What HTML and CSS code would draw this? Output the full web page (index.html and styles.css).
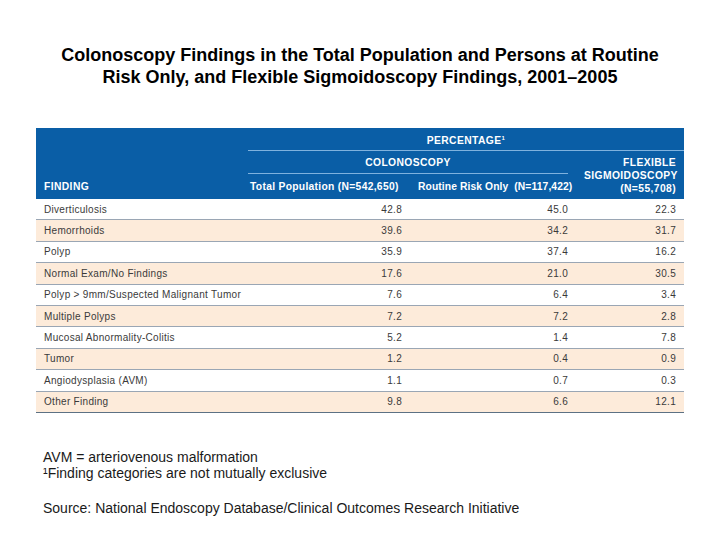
FILE: index.html
```html
<!DOCTYPE html>
<html>
<head>
<meta charset="utf-8">
<link rel="stylesheet" href="styles.css">
</head>
<body>
<div class="slide">
  <h1 class="title">Colonoscopy Findings in the Total Population and Persons at Routine<br>Risk Only, and Flexible Sigmoidoscopy Findings, 2001–2005</h1>
  <table class="data">
    <colgroup>
      <col class="c1"><col class="c2"><col class="c3"><col class="c4">
    </colgroup>
    <thead>
      <tr class="h1">
        <th></th>
        <th colspan="3" class="center ruled">PERCENTAGE<sup>1</sup></th>
      </tr>
      <tr class="h2">
        <th></th>
        <th colspan="2" class="center ruled short">COLONOSCOPY</th>
        <th rowspan="2" class="right flex">FLEXIBLE<br>SIGMOIDOSCOPY<br>(N=55,708)</th>
      </tr>
      <tr class="h3">
        <th class="left">FINDING</th>
        <th class="left">Total Population (N=542,650)</th>
        <th class="right">Routine Risk Only&nbsp; (N=117,422)</th>
      </tr>
    </thead>
    <tbody>
      <tr><td>Diverticulosis</td><td>42.8</td><td>45.0</td><td>22.3</td></tr>
      <tr class="alt"><td>Hemorrhoids</td><td>39.6</td><td>34.2</td><td>31.7</td></tr>
      <tr><td>Polyp</td><td>35.9</td><td>37.4</td><td>16.2</td></tr>
      <tr class="alt"><td>Normal Exam/No Findings</td><td>17.6</td><td>21.0</td><td>30.5</td></tr>
      <tr><td>Polyp &gt; 9mm/Suspected Malignant Tumor</td><td>7.6</td><td>6.4</td><td>3.4</td></tr>
      <tr class="alt"><td>Multiple Polyps</td><td>7.2</td><td>7.2</td><td>2.8</td></tr>
      <tr><td>Mucosal Abnormality-Colitis</td><td>5.2</td><td>1.4</td><td>7.8</td></tr>
      <tr class="alt"><td>Tumor</td><td>1.2</td><td>0.4</td><td>0.9</td></tr>
      <tr><td>Angiodysplasia (AVM)</td><td>1.1</td><td>0.7</td><td>0.3</td></tr>
      <tr class="alt last"><td>Other Finding</td><td>9.8</td><td>6.6</td><td>12.1</td></tr>
    </tbody>
  </table>
  <div class="notes">
    <p>AVM = arteriovenous malformation</p>
    <p>¹Finding categories are not mutually exclusive</p>
    <p class="source">Source: National Endoscopy Database/Clinical Outcomes Research Initiative</p>
  </div>
</div>
</body>
</html>
```

FILE: styles.css
```css
html, body {
  margin: 0;
  padding: 0;
  background: #ffffff;
}
.slide {
  width: 720px;
  height: 540px;
  font-family: "Liberation Sans", Arial, sans-serif;
}
.title {
  margin: 0;
  padding-top: 44px;
  text-align: center;
  font-size: 18px;
  line-height: 22px;
  font-weight: bold;
  color: #000;
}
.data {
  margin: 40px 0 0 36px;
  width: 648px;
  border-collapse: collapse;
  table-layout: fixed;
  font-family: "Liberation Sans", Arial, sans-serif;
}
.c1 { width: 212px; }
.c2 { width: 162px; }
.c3 { width: 166px; }
.c4 { width: 108px; }
thead th {
  background-color: #0a5ea6;
  color: #ffffff;
  font-size: 10.3px;
  font-weight: bold;
  letter-spacing: 0.4px;
  padding: 0 8px;
  white-space: nowrap;
}
thead th.center { text-align: center; }
thead th.left { text-align: left; }
thead th.right { text-align: right; }
.h1 th { height: 21px; vertical-align: middle; }
.h2 th { height: 23px; vertical-align: middle; }
.h3 th { height: 25px; vertical-align: middle; }
th.ruled {
  padding-left: 0;
  padding-right: 0;
  background-image: linear-gradient(#7fb2de, #7fb2de);
  background-repeat: no-repeat;
  background-position: left bottom;
  background-size: 100% 1px;
}
th.ruled.short {
  background-size: calc(100% - 8px) 1px;
  padding-right: 8px;
}
.h1 th.ruled { padding-top: 2px; }
th.flex { line-height: 13px; vertical-align: bottom; padding-bottom: 4px; }
.h3 th:nth-child(2) { padding-left: 2px; letter-spacing: 0.3px; }
.h3 th:nth-child(3) { letter-spacing: 0.1px; padding-right: 6px; }
sup {
  font-size: 6px;
  vertical-align: top;
  line-height: 6px;
}
tbody td {
  height: 20.4px;
  padding: 0 8px;
  font-size: 10px;
  color: #3a3a3a;
  text-align: right;
  border-bottom: 1px solid #9aa6b4;
  letter-spacing: 0.3px;
  white-space: nowrap;
}
tbody td:first-child {
  text-align: left;
}
tbody tr.alt td { background: #fdebda; }
tbody tr.last td { border-bottom: 1px solid #5c7184; }
.notes {
  margin: 36px 0 0 43px;
  font-size: 14px;
  line-height: 16px;
  color: #1a1a1a;
}
.notes p { margin: 0; }
.notes .source { margin-top: 19px; }
```
